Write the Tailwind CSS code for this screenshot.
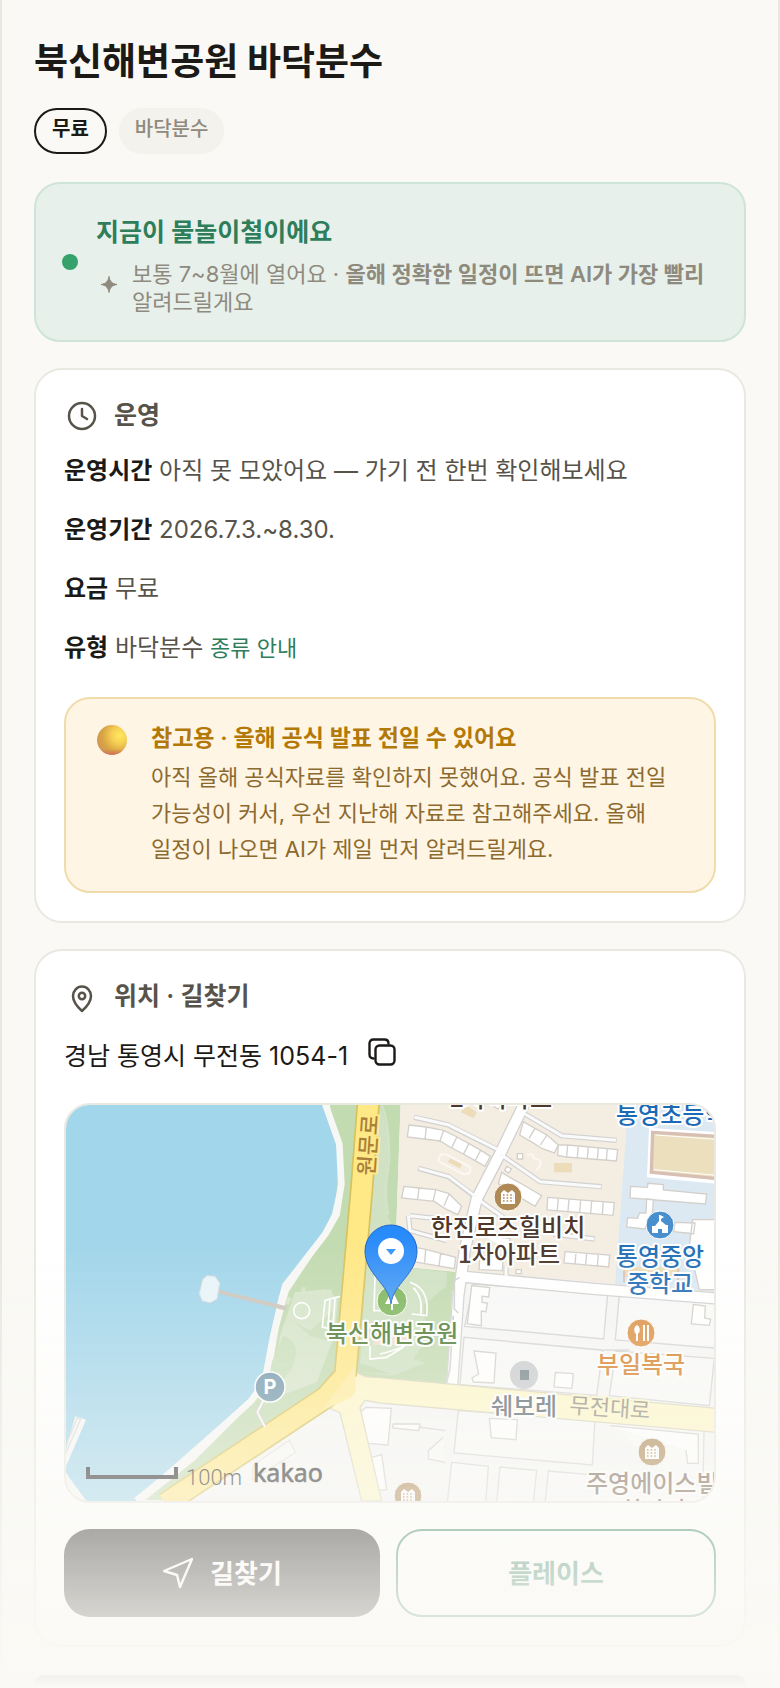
<!DOCTYPE html>
<html lang="ko">
<head>
  <meta charset="UTF-8" />
  <meta name="viewport" content="width=device-width, initial-scale=1.0"/>
  <title>북신해변공원 바닥분수</title>
  <script src="https://cdn.jsdelivr.net/npm/@tailwindcss/browser@4"></script>
</head>
<body class="bg-[#faf9f5] font-['Inter','Noto_Sans_CJK_KR',sans-serif] text-[#1c1a17] break-keep">

  <main class="min-h-screen border-x-2 border-[#e9e8e1] px-8 pt-9">
    <h1 class="text-[37px] leading-[52px] font-bold">북신해변공원 바닥분수</h1>

    <div class="mt-5 flex gap-3 text-[20px] leading-[38px]">
      <span class="rounded-full border-2 border-[#1c1a17] px-4 pb-1 font-semibold">무료</span>
      <span class="rounded-full border-y-2 border-[#f3f2ed] bg-[#f3f2ed] px-4 pb-1 font-medium text-[#8f8a7e]">바닥분수</span>
    </div>

    <!-- season banner -->
    <section class="mt-7 flex items-center gap-[18px] rounded-[26px] border-2 border-[#cfe4d8] bg-[#e7f0ea] pt-7 pr-7 pb-6 pl-[26px]">
      <span class="mb-1 size-4 shrink-0 rounded-full bg-[#35a16b]"></span>
      <div>
        <h2 class="text-[25px] leading-10 font-semibold text-[#2e7d5b]">지금이 물놀이철이에요</h2>
        <div class="mt-2 flex gap-3 text-[22px] leading-7 text-[#8f8a7e]">
          <svg class="mt-3 size-6 shrink-0" viewBox="0 0 24 24" fill="currentColor"><path d="M13 4.500c.8 5 3 7.200 8 8-5 .8-7.200 3-8 8-.8-5-3-7.200-8-8 5-.8 7.200-3 8-8z" stroke="currentColor"/></svg>
          <p>보통 7~8월에 열어요 · <b class="font-semibold">올해 정확한 일정이 뜨면 AI가 가장 빨리</b> 알려드릴게요</p>
        </div>
      </div>
    </section>

    <!-- opening info -->
    <section class="mt-[26px] rounded-[28px] border-2 border-[#e9e8e1] bg-white px-7 pt-[25px] pb-7">
      <h2 class="flex items-center gap-[14px] text-[25px] leading-10 font-semibold text-[#57534a]">
        <svg class="size-9" viewBox="0 0 36 36" fill="none" stroke="currentColor" stroke-width="2.500" stroke-linecap="round" stroke-linejoin="round"><circle cx="18" cy="19" r="13"/><path d="M18 12v7l5 3"/></svg>
        운영
      </h2>
      <div class="mt-4 flex flex-col gap-[19px] text-[24px] leading-10 text-[#57534a]">
        <p><b class="font-semibold text-[#1c1a17]">운영시간</b> 아직 못 모았어요 — 가기 전 한번 확인해보세요</p>
        <p><b class="font-semibold text-[#1c1a17]">운영기간</b> 2026.7.3.~8.30.</p>
        <p><b class="font-semibold text-[#1c1a17]">요금</b> 무료</p>
        <p><b class="font-semibold text-[#1c1a17]">유형</b> 바닥분수 <a href="#" class="text-[22px] text-[#2e7d5b]">종류 안내</a></p>
      </div>

      <div class="mt-[29px] flex gap-6 rounded-[26px] border-2 border-[#f0dcaa] bg-[#fff5e5] pt-5 pr-8 pb-6 pl-[31px]">
        <svg class="mt-1.5 size-[30px] shrink-0" viewBox="0 0 30 30">
          <defs>
            <radialGradient id="ball" cx=".75" cy=".35" r=".75">
              <stop offset="0" stop-color="#ffe95e"/><stop offset=".35" stop-color="#f6cf55"/><stop offset=".75" stop-color="#d9a443"/><stop offset="1" stop-color="#cf9a52"/>
            </radialGradient>
            <linearGradient id="ballRim" x1="0" y1="0" x2="0" y2="1">
              <stop offset=".8" stop-color="#d0705c" stop-opacity="0"/><stop offset="1" stop-color="#d0705c"/>
            </linearGradient>
          </defs>
          <circle cx="15" cy="15" r="15" fill="url(#ball)"/><circle cx="15" cy="15" r="15" fill="url(#ballRim)"/>
        </svg>
        <div>
          <h3 class="text-[23px] leading-[38px] font-semibold text-[#b27808]">참고용 · 올해 공식 발표 전일 수 있어요</h3>
          <p class="mt-[2px] text-[22px] leading-9 text-[#8c6a2e]">아직 올해 공식자료를 확인하지 못했어요. 공식 발표 전일 가능성이 커서, 우선 지난해 자료로 참고해주세요. 올해 일정이 나오면 AI가 제일 먼저 알려드릴게요.</p>
        </div>
      </div>
    </section>

    <!-- location -->
    <section class="mt-[26px] rounded-[28px] border-2 border-[#e9e8e1] bg-white px-7 pt-[25px] pb-7">
      <h2 class="flex items-center gap-[14px] text-[25px] leading-10 font-semibold text-[#57534a]">
        <svg class="size-9" viewBox="0 0 36 36" fill="none" stroke="currentColor" stroke-width="2.500" stroke-linejoin="round"><path d="M18 33c-5-4.500-9-9.500-9-15a9 9.500 0 0 1 18 0c0 5.500-4 10.500-9 15z"/><circle cx="18" cy="18" r="3.200"/></svg>
        위치 · 길찾기
      </h2>
      <div class="mt-5 flex items-center gap-5 text-[25px] leading-10">
        <p>경남 통영시 무전동 1054-1</p>
        <button type="button" aria-label="주소 복사" class="pb-2">
          <svg class="size-7" viewBox="0 0 28 28" fill="none" stroke="currentColor" stroke-width="2.400" stroke-linecap="round" stroke-linejoin="round"><rect x="7.500" y="7.500" width="19" height="19" rx="4"/><path d="M5.500 20.500C3 20.500 1.500 19 1.500 16.500V5.500C1.500 3 3 1.500 5.500 1.500h11c2.500 0 4 1.500 4 4"/></svg>
        </button>
      </div>

      <div class="mt-[27px] h-[400px] overflow-hidden rounded-[26px] border-2 border-[#e9e8e1]">
        <svg class="size-full" viewBox="0 0 648 396" preserveAspectRatio="xMidYMid slice">
          <defs>
            <linearGradient id="pin" x1="0" y1="0" x2="0" y2="1"><stop offset="0" stop-color="#2489fb"/><stop offset="1" stop-color="#4a9cf6"/></linearGradient>
            <g id="apt"><path fill="#fff" d="M-7-4l3-3 4 3 4-3 3 3V7H-7z"/><path stroke="#b08b58" stroke-width="1.600" stroke-dasharray="1.600 2" d="M-5-2H6M-5 1H6M-5 4H6"/></g>
          </defs>
          <g transform="translate(-16 -16) scale(.33333)">
            <path fill="#f6f6f5" d="M0 0h2040v1300H0z"/>
            <!-- sea -->
            <path fill="#a2d6eb" d="M0 0h820v48l42 117 4 120-20 90-31 62-115 155-40 170-20 105-40 60-290 255-60 90H116L48 1150z"/>
            <!-- park -->
            <path fill="#c3dbb1" d="M838 40h214l-17 480 55 16 138 14-22 60-8 180 3 100-330-25-20 30-185 118-170 110-160 110h-50l150-120 185-185 40-60 25-150 30-110 110-165 32-70 5-190z"/>
            <path fill="#d0e2c3" d="M990 48l25 80-4 250 30 60 40 98 110 14-12 250-150 60-100-10 25-440z"/>
            <path fill="#d6e5ca" d="M830 600l35 30-15 120-50 130-80 30-60 20 30-190 45-130z"/>
            <path fill="#c9dfba" d="M700 740q60 20 25 100-40 40-20 80l-65 30 25-130zM735 700l45 25 70-60-20 90-50-15z"/>
            <path fill="#c3dbb1" d="M1120 650l70-60-10 250-90-30 40-60zM925 820l100 35-95-5z"/>
            <path fill="none" stroke="#d6e5ca" stroke-width="12" d="M760 595v50M800 625l45-20M720 625l-10 20"/>
            <path fill="none" stroke="#f7f7f6" stroke-width="20" stroke-linejoin="round" d="M824 40l44 125 6 120-14 90-34 60-120 155-12 45-26 115-24 130-40 55-190 175-155 125"/>
            <path fill="#cbc6be" d="M505 602l205 50-2 13-206-52z"/>
            <path fill="#e8f4fa" stroke="#ddd" stroke-width="3" d="M470 560l25 2 14 20-8 48-20 11-24-5-9-22 10-42z"/>
            <path fill="#f7f7f6" d="M40 1110l36-128 32 10-60 140z"/><path fill="none" stroke="#d9d9d6" stroke-width="4" d="M48 1070l34-84 10 5-44 100M48 1170l56 68"/><path fill="none" stroke="#f7f7f6" stroke-width="22" d="M40 1160l60 82"/>
            <circle cx="755" cy="665" r="24" fill="none" stroke="#fff" stroke-width="5"/>
            <path fill="none" stroke="#fff" stroke-width="5" d="M870 622l-45 12-8 80 45 10M840 634l-6 80M855 630l-6 84M975 560l-3 105h30M1080 580q60 20 50 100l-45-5M1090 596q30 30 22 80M960 770v40l50-5 50-30M990 795q80-20 95-40"/>
            <path fill="#f3dfcd" d="M970 740h100v28H970z"/>
            <path fill="none" stroke="#d3e4c8" stroke-width="6" d="M995 48q25 60 22 170l-12 90 10 70"/>
            <!-- apartment and school grounds -->
            <path fill="#f4ede2" d="M1052 40h683l-40 545-325-28-142-8-138-14-55-15z"/>
            <path fill="#dce9f2" d="M1735 40h270v570l-310-25z"/>
            <g stroke="#d5d5d5" stroke-width="4" fill="#f9f9f8">
              <path d="M1270 585l403 30-12 135-417-38zM1708 618l300 25-15 134-297-24zM1242 745l417 38h80M1242 745l-12 142 410 32 18-135zM1698 786l295 22-15 142-300-30zM1190 958l-300-30M1225 965l410 28-8 135-415-36zM1672 1000l290 25-4 215M1205 1120l110 12-8 110h-115zM1350 1134l110 10-10 98h-110zM1495 1146l500 45-5 60-505-5zM1037 1005l150 20M1180 1045l-45 40v25l50 10"/>
            </g>
            <!-- inner streets, grey edge below white fill -->
            <g fill="none" stroke-linejoin="round">
              <path stroke="#d2d2d2" stroke-width="38" d="M1425 40l-75 155-70 135-35 150-20 140-20 290M1225 562l410 38 360 28"/>
              <path stroke="#d2d2d2" stroke-width="16" d="M1092 85l100 22 150 75M1425 75l110 65 165 14M1105 238l90 25 80 60M1350 195l120 83 185 15M1290 335l70 50M1080 380l90 10 30 20M1075 380l5 45 110 30M1510 435l125 15M1368 530v35"/>
              <path stroke="#fff" stroke-width="30" d="M1425 40l-75 155-70 135-35 150-20 140-20 290M1225 562l410 38 360 28"/>
              <path stroke="#fafafa" stroke-width="9" d="M1094 85l100 22 150 75M1425 75l110 65 163 14M1107 238l90 25 80 60M1350 195l120 83 183 15M1290 335l70 50M1080 380l90 10 30 20M1075 380l5 45 110 30M1510 435l123 15M1368 530v35"/>
              <path stroke="#d2d2d2" stroke-width="5" d="M1228 565l-15 10v85l12 12M1210 680l-10 160-10 40"/>
            </g>
            <g fill="#fff" stroke="#d3d0cb" stroke-width="4">
              <path d="M1077 108l52 6 52 10 40 20 36 20 36 20 28 18-16 30-35-20-36-20-34-18-30-18-98-12zM1129 114l-4 38M1181 124l-12 34M1221 144l-16 32M1257 164l-17 32M1293 182l-18 34"/>
              <path d="M1420 98l35 20 36 20 34 30-12 24-34-12-36-22-34-20zM1455 118l-18 30M1491 138l-20 30M1525 168h28l150 14-4 34-150-12-26-5zM1553 168l-3 35M1585 170l-3 35M1615 172l-3 36M1645 176l-3 34M1672 178l-3 36"/>
              <path d="M1062 292l45 5 50 5 40 12 38 38-12 25-38-18-32-22-98-10zM1107 297l-4 34M1157 302l-8 36M1197 316l-15 34"/>
              <path d="M1355 250l36 22 30 16 54 32-20 32-50-30-60-38zM1493 325l200 16-4 38-198-16zM1525 328l-3 36M1557 330l-3 36M1592 333l-3 36M1625 336l-3 36M1660 338l-3 38"/>
              <path d="M1095 475l32 6 90 24-4 34-118-20zM1127 481l-3 40M1172 492l-5 40M1545 488l134 10-3 36-134-12zM1578 490l-3 36M1610 492l-3 36M1645 495l-3 36M1300 440l80 8-2 36M1290 500h70l-3 45-70-3z"/>
              <path d="M1402 194h16v16h-16zM1370 232l14 8-8 12-12-8zM1398 542h16v12h-16zM1275 20l70 40 20-30"/>
              <path d="M1742 292l50 3 2-12 46 4v16l130 12-4 30-226-18zM1790 330l20 2-2 40-24 48-54-6 3-28 30 2 5-16h20zM1875 400l60 2-4 32-60-6zM1928 392h80v210h-60l-30-130z"/>
              <path d="M1265 590l54 6-3 28-20-2v18l16 2-4 26-14-2v44l-42-6zM1930 646l36 5-2 36 18 4-4 18-54-4zM1272 786l66 6-6 90-62-3-4-12 20-12zM1516 850l54 4-4 44-54-4zM1318 988l84 4-4 60-74-6zM948 955l76 3-10 110-60-5-25-92z"/>
              <path d="M965 1105l30-8 15 105-30 2M1030 1005h80l-4 20-78-8zM1680 1010l265 25v88h-32l-5-40"/>
            </g>
            <path fill="#fff" stroke="#fff" stroke-width="6" d="M1800 120l230 14v150l-236-22z"/><path fill="#ebdfbe" stroke="#d8bfb3" stroke-width="10" d="M1808 130l222 14v128l-226-22z"/>
            <path fill="none" stroke="#fff" stroke-width="3" d="M1816 138l200 14M1812 242l200 18"/>
            <path fill="#ecdcb9" d="M1720 535h170v30h-170zM1232 70l20-20 28 20-8 18zM1512 222h54v28h-54z"/><path fill="none" stroke="#d8bfb3" stroke-width="5" d="M1722 545v35M1884 535v40"/>
            <path fill="none" stroke="#faf7f1" stroke-width="7" d="M1175 195q-20 20 5 30l60 30q30 0 18-22l-65-35zM1432 200q15-12 20 8 35 5 8 35"/><path fill="#ecdcb9" d="M1200 208l36 18-6 12-36-18z"/>
            <!-- wide roads -->
            <path fill="#fdf7c8" stroke="#dad6bd" stroke-width="4" d="M910 845l35 18 45 3 1010 92v72l-1010-88-45-8-15 22 65 280h-60l-65-265-60-25z"/>
            <path fill="none" stroke="#d6c25e" stroke-width="70" stroke-linejoin="round" d="M955 40l-20 260-49 560M886 858l-60 68-480 318"/>
            <path fill="none" stroke="#ffe886" stroke-width="60" stroke-linejoin="round" d="M955 40l-20 260-49 560-60 66-480 318"/>
            <path fill="#ffec9e" d="M915 830l2 75-12 20-90 40z"/>
            <path fill="none" stroke="#d0d0d0" stroke-width="10" d="M640 935l-18 35 24 45"/><path fill="none" stroke="#fff" stroke-width="5" d="M640 935l-18 35 24 45"/>
            <path fill="#f9f9f8" stroke="#dcd9d2" stroke-width="3" d="M610 1128l108-74 18 36-130 84z"/>
          </g>

          <!-- place icons -->
          <circle cx="326" cy="196" r="15" fill="#80b75e" stroke="#fff"/><path fill="#fff" d="M326 185l7 14h-6v6h-2v-6h-6z"/>
          <circle cx="442" cy="92" r="14" fill="#af8a56" stroke="#fff"/><use href="#apt" x="442" y="92"/>
          <circle cx="586" cy="347" r="14" fill="#af8a56" stroke="#fff"/><use href="#apt" x="586" y="347"/>
          <circle cx="342" cy="391" r="14" fill="#af8a56" stroke="#fff"/><use href="#apt" x="342" y="391"/>
          <circle cx="594" cy="120" r="14" fill="#4a8fcd" stroke="#fff"/><path fill="#fff" d="M594 110l4 2-3 2v2l5 4h2v8h-6v-4h-4v4h-6v-7h3l4-5v-6z"/>
          <circle cx="575" cy="228" r="14" fill="#dc9246" stroke="#fff"/><path fill="#fff" d="M571 220a4 5 0 0 1 1 9v7h-2v-7a4 5 0 0 1 1-9zM577 220h2v16h-2zM581 220h2v16h-2z"/>
          <circle cx="458" cy="270" r="14" fill="#cacbce"/><path fill="#748388" d="M454 265h9v10h-9z"/>
          <circle cx="204" cy="282" r="15" fill="#6f96aa" stroke="#fff" stroke-width="1.500"/>
          <text x="204" y="289" font-size="20" font-weight="700" fill="#fff" text-anchor="middle">P</text>

          <g font-family="'Noto Sans CJK KR', sans-serif" font-size="24" font-weight="500" stroke="#fff" stroke-width="4" stroke-linejoin="round" paint-order="stroke">
            <g text-anchor="middle">
              <text x="435" y="2" fill="#4e382b">2차아파트</text>
              <text x="442" y="131" fill="#4e382b">한진로즈힐비치</text>
              <text x="443" y="158" fill="#4e382b">1차아파트</text>
              <text x="594" y="160" fill="#246fb8">통영중앙</text>
              <text x="594" y="187" fill="#246fb8">중학교</text>
              <text x="575" y="268" fill="#d4802a">부일복국</text>
              <text x="458" y="310" fill="#56646c">쉐보레</text>
              <text x="326" y="237" fill="#4c7a33">북신해변공원</text>
            </g>
            <text x="550" y="18" fill="#1c69b5">통영초등학교</text>
            <text x="520" y="387" fill="#76604f">주영에이스빌</text>
            <text x="541" y="414" fill="#76604f">1차아파트</text>
            <text x="503" y="308" font-size="22" fill="#8f8d80" stroke="#fdf7c8" font-weight="400" transform="rotate(4 503 308)">무전대로</text>
            <text x="308" y="71" font-size="22" fill="#a9803a" stroke="#ffe886" transform="rotate(-86 308 71)">원문로</text>
          </g>

          <!-- marker -->
          <path fill="url(#pin)" stroke="#1f66c9" d="M325 199c-2-20-26-30-26-53a26 26 0 0 1 52 0c0 23-24 33-26 53z"/>
          <circle cx="325" cy="146" r="13" fill="#fff"/><path fill="#3d97fa" d="M320 144h10l-5 6z"/>

          <!-- scale and provider -->
          <path fill="none" stroke="#222" stroke-width="4" d="M22 362v10h88v-10"/>
          <text x="120" y="380" font-family="Roboto, sans-serif" font-size="22" font-weight="300" fill="#222">100m</text>
          <text x="187" y="377" font-family="'Noto Sans', sans-serif" font-size="25" fill="#222" stroke="#222" stroke-width=".6">kakao</text>
        </svg>
      </div>

      <div class="mt-[26px] flex gap-4 text-[26px] font-bold">
        <button type="button" class="flex h-[88px] flex-1 items-center justify-center gap-4 rounded-[26px] bg-[#1c1a17] text-white">
          <svg class="size-8" viewBox="0 0 32 32" fill="none" stroke="currentColor" stroke-width="2.400" stroke-linejoin="round"><path d="M30 2L2 14l13 4 3 12z"/></svg>
          길찾기
        </button>
        <button type="button" class="h-[88px] flex-1 rounded-[26px] border-2 border-[#2e7d5b] text-[#2e7d5b]">플레이스</button>
      </div>
    </section>

    <div class="mt-7 h-2.5 rounded-t-[28px] bg-[#1c1a17]"></div>
  </main>

  <div class="pointer-events-none fixed inset-x-0 bottom-0 h-[448px] bg-linear-to-b from-[#faf9f5]/0 to-[#faf9f5]"></div>

</body>
</html>
